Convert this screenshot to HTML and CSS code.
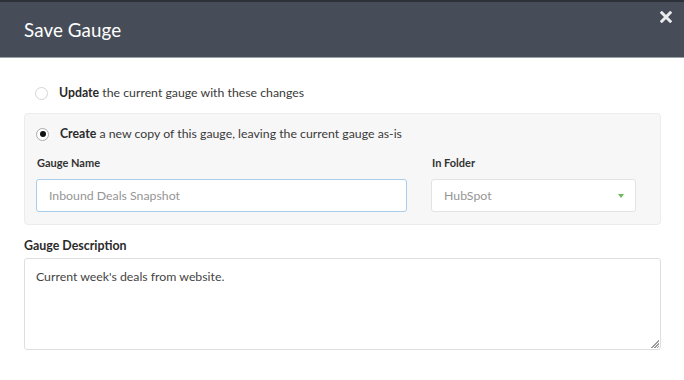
FILE: index.html
```html
<!DOCTYPE html>
<html>
<head>
<meta charset="utf-8">
<link rel="stylesheet" href="styles.css">
</head>
<body>
<div class="modal">
  <div class="header">
    <h1 class="title">Save Gauge</h1>
    <span class="close">
      <svg width="12" height="12" viewBox="0 0 12 12"><path d="M1.8 1.8 L10.2 10.2 M10.2 1.8 L1.8 10.2" stroke="#e9ebee" stroke-width="3" stroke-linecap="square"/></svg>
    </span>
  </div>
  <div class="body">
    <label class="option">
      <span class="radio"></span>
      <span class="opt-text"><b>Update</b> the current gauge with these changes</span>
    </label>
    <div class="panel">
      <label class="option option-inner">
        <span class="radio checked"></span>
        <span class="opt-text"><b>Create</b> a new copy of this gauge, leaving the current gauge as-is</span>
      </label>
      <div class="fields">
        <div class="field field-name">
          <div class="label">Gauge Name</div>
          <div class="input focused">Inbound Deals Snapshot</div>
        </div>
        <div class="field field-folder">
          <div class="label">In Folder</div>
          <div class="input select">HubSpot<span class="caret"></span></div>
        </div>
      </div>
    </div>
    <div class="desc-label">Gauge Description</div>
    <div class="textarea">Current week's deals from website.<span class="grip"></span></div>
  </div>
</div>
</body>
</html>
```
FILE: styles.css
```css
html, body { margin: 0; padding: 0; background: #fff; }
body { font-family: "Lato", "Open Sans", sans-serif; color: #333; width: 684px; height: 380px; overflow: hidden; }
.header {
  height: 55px;
  background: #464d58;
  border-top: 2px solid #2c3139;
  border-bottom: 1px solid #9aa0a8;
  display: flex;
  align-items: center;
  justify-content: space-between;
  padding: 0 12px 0 24px;
  box-sizing: content-box;
}
.title { margin: 0 0 1px; font-size: 18.8px; font-weight: 400; color: #fff; letter-spacing: 0.1px; }
.close { align-self: flex-start; margin-top: 9px; display: flex; }
.body { padding: 27px 23px 0 24px; }
.option { display: flex; align-items: center; font-size: 12.3px; color: #3a3a3a; }
.option b { font-weight: 700; color: #2a2a2a; }
.radio {
  width: 11px; height: 11px; border-radius: 50%;
  border: 1px solid #d5d5d5; background: #fff;
  margin-left: 11px; margin-right: 11px; flex: none;
  display: flex; align-items: center; justify-content: center;
}
.radio.checked { border-color: #aaa; }
.radio.checked::after { content: ""; width: 6px; height: 6px; border-radius: 50%; background: #111; }
.opt-text { line-height: 16px; }
.panel {
  margin-top: 12px;
  background: #f7f7f7;
  border: 1px solid #ececec;
  border-radius: 4px;
  padding: 12px 24px 12px 11px;
}
.option-inner .radio { margin-left: 0; }
.fields { display: flex; gap: 24px; margin-top: 15px; }
.field-name { width: 371px; }
.field-folder { width: 205px; }
.label { font-size: 11px; font-weight: 700; color: #333; margin-left: 1px; margin-bottom: 10px; line-height: 12px; }
.input {
  box-sizing: border-box; height: 33px;
  border: 1px solid #e3e3e3; border-radius: 3px; background: #fff;
  font-size: 12.3px; color: #959595; padding: 0 12px;
  display: flex; align-items: center;
}
.input.focused { border-color: #a7cdea; }
.select { position: relative; }
.caret {
  position: absolute; right: 11px; top: 14px;
  width: 0; height: 0;
  border-left: 3.5px solid transparent; border-right: 3.5px solid transparent;
  border-top: 4px solid #6dbb5a;
}
.desc-label { font-size: 12.4px; font-weight: 700; color: #2a2a2a; margin-top: 14px; line-height: 14px; }
.textarea {
  position: relative;
  margin-top: 5px;
  height: 92px; box-sizing: border-box;
  border: 1px solid #dedede; border-radius: 3px;
  font-size: 12.3px; color: #444; padding: 10px 11px;
  line-height: 16px;
}
.grip {
  position: absolute; right: 1px; bottom: 1px; width: 9px; height: 9px;
  background: repeating-linear-gradient(135deg, transparent 0 1px, #9a9a9a 1px 2px);
  clip-path: polygon(100% 0, 100% 100%, 0 100%);
}
```
